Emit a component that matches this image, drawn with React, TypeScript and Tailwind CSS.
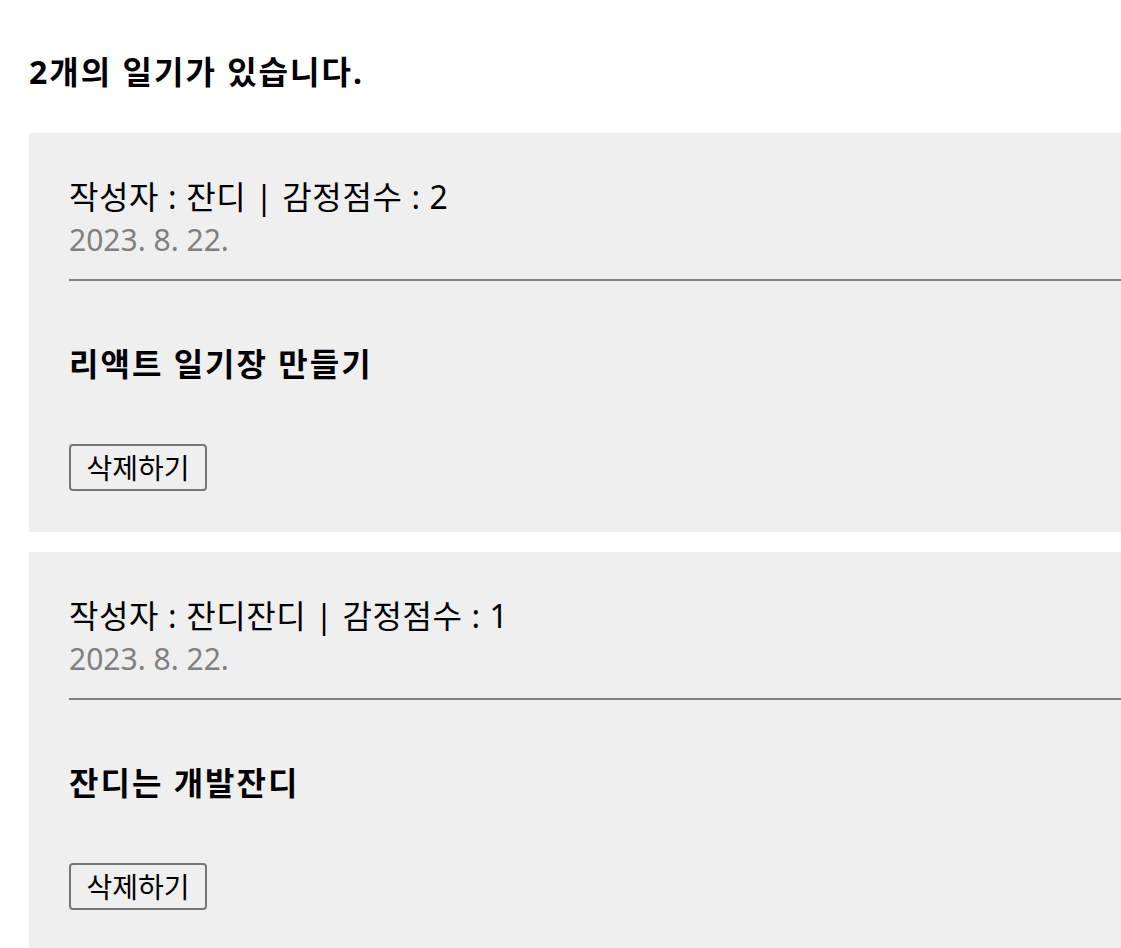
import React from "react";

const diaries = [
  { author: "잔디", emotion: 2, date: "2023. 8. 22.", content: "리액트 일기장 만들기" },
  { author: "잔디잔디", emotion: 1, date: "2023. 8. 22.", content: "잔디는 개발잔디" },
];

export default function App() {
  return (
    <div
      className="w-screen h-screen overflow-hidden bg-white text-black"
      style={{ fontFamily: '"Noto Sans", "Noto Sans CJK KR", sans-serif' }}
    >
      <div className="pl-[29px] pt-[50px]">
        <h4 className="h-[44px] leading-[44px] text-[32px] font-bold tracking-[2px] mb-[39px]">2개의 일기가 있습니다.</h4>
        <div className="flex flex-col gap-[20px]">
          {diaries.map((d, i) => (
            <div key={i} className="w-[1200px] bg-[#efefef] pt-[40px] pb-[41px] pl-[40px]">
              <div className="h-[48px] leading-[48px] text-[32px] tracking-[0.6px]">
                작성자 : {d.author} | 감정점수 : {d.emotion}
              </div>
              <div className="h-[38px] leading-[38px] text-[30px] text-[#808080]">{d.date}</div>
              <div className="mt-[20px] h-[2px] bg-[#808080]" />
              <div className="mt-[59px] h-[48px] leading-[48px] text-[32px] font-bold tracking-[2px]">{d.content}</div>
              <button className="mt-[56px] h-[47px] w-[138px] border-2 border-[#767676] rounded-[4px] bg-[#efefef] text-[28px] leading-none flex items-center justify-center">
                삭제하기
              </button>
            </div>
          ))}
        </div>
      </div>
    </div>
  );
}
